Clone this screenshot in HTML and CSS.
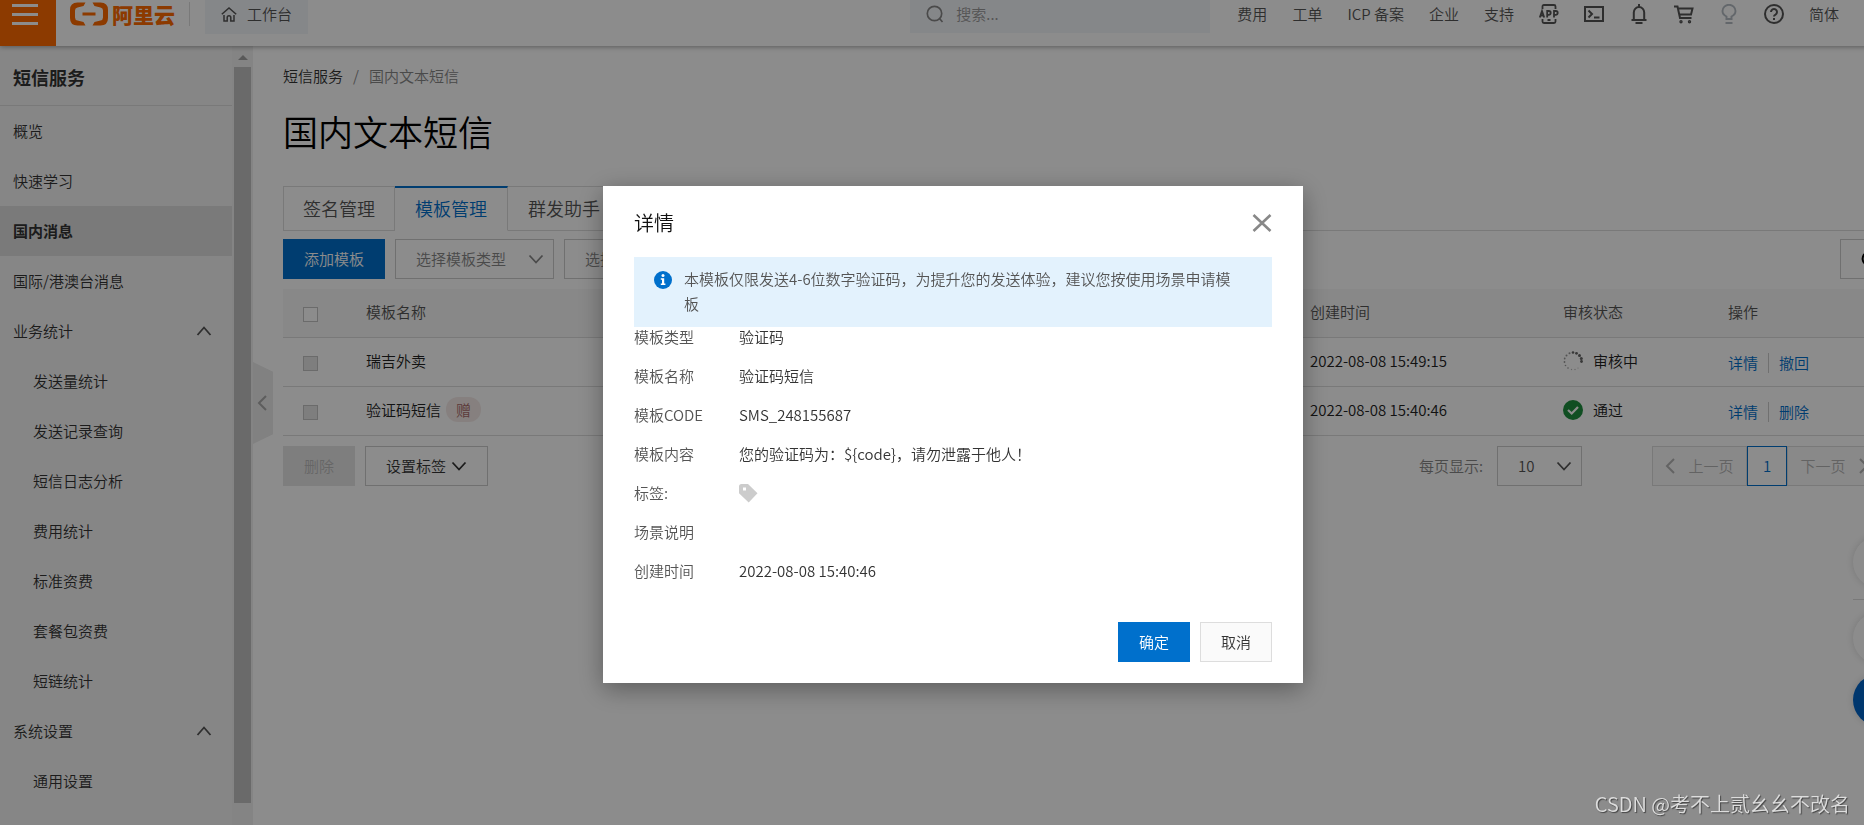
FILE: index.html
```html
<!DOCTYPE html>
<html lang="zh-CN">
<head>
<meta charset="utf-8">
<title>短信服务 - 国内文本短信</title>
<link rel="stylesheet" href="styles.css">
</head>
<body>
<svg class="sprite" aria-hidden="true">
  <symbol id="down" viewBox="0 0 16 16"><path d="M1.500 4.500 8 11.500l6.500-7" fill="none" stroke="currentColor" stroke-width="1.800"/></symbol>
  <symbol id="up" viewBox="0 0 16 16"><path d="M1.500 12 8 4.500l6.500 7.500" fill="none" stroke="currentColor" stroke-width="1.800"/></symbol>
  <symbol id="left" viewBox="0 0 10 16"><path d="M9 1 2 8l7 7" fill="none" stroke="currentColor" stroke-width="2"/></symbol>
  <symbol id="right" viewBox="0 0 10 16"><path d="M1 1l7 7-7 7" fill="none" stroke="currentColor" stroke-width="2"/></symbol>
</svg>
<div class="app">
  <header class="header">
    <button class="menu-btn" aria-label="菜单"><span></span><span></span><span></span></button>
    <a class="logo" href="#">
      <svg width="38" height="24" viewBox="0 0 38 24" fill="#ff6a00" aria-hidden="true">
        <path d="M15.500.5H7.500Q0 .5 0 8v8q0 7.500 7.500 7.500h8l-2-3.600-6-1.400Q5 18 5 15.500v-7Q5 6 7.500 5.500l6-1.400zM22.500.5h8Q38 .5 38 8v8q0 7.500-7.500 7.500h-8l2-3.600 6-1.400q2.500-.5 2.500-3v-7Q33 6 30.500 5.500l-6-1.400zM12.500 10.500h13v3h-13z"/>
      </svg>
      <span>阿里云</span>
    </a>
    <a class="workbench" href="#">
      <svg width="16" height="16" viewBox="0 0 16 16" fill="none" stroke="currentColor" stroke-width="1.500" aria-hidden="true"><path d="M.8 8.200 8 2l7.200 6.200M3 9v6h3.200v-3.500a1.800 1.800 0 0 1 3.600 0V15H13V9"/></svg>
      <span>工作台</span>
    </a>
    <label class="search">
      <svg width="18" height="18" viewBox="0 0 18 18" fill="none" stroke="currentColor" stroke-width="1.700" aria-hidden="true"><circle cx="8.500" cy="8.500" r="7.200"/><path d="m13.500 13.500 3 3.500"/></svg>
      <input type="text" placeholder="搜索..." aria-label="搜索">
    </label>
    <nav class="topnav">
      <a href="#">费用</a><a href="#">工单</a><a href="#">ICP 备案</a><a href="#">企业</a><a href="#">支持</a>
      <a href="#" aria-label="APP"><svg width="20" height="20" viewBox="0 0 20 20" fill="none" stroke="currentColor" stroke-width="1.800"><path d="M3.500 5V2.500Q3.500 1 5 1h10q1.500 0 1.500 1.500V5M3.500 15v2.500Q3.500 19 5 19h10q1.500 0 1.500-1.500V15M8.500 16h3M.8 13.500 3 7l2.200 6.500M1.500 11.500h3M8.200 13.500V7h1.600a1.800 1.800 0 0 1 0 3.800H8.200M15 13.500V7h1.800a1.800 1.800 0 0 1 0 3.800H15"/></svg></a>
      <a href="#" aria-label="命令行"><svg width="20" height="20" viewBox="0 0 20 20" fill="none" stroke="currentColor" stroke-width="2"><path d="M1 3h18v14H1zM4.500 6.500 8 10l-3.500 3.500M10 13.500h5.500"/></svg></a>
      <a href="#" aria-label="消息"><svg width="20" height="20" viewBox="0 0 20 20" fill="none" stroke="currentColor" stroke-width="2"><path d="M10 0v3M2.500 16h15M4.800 16V8.500a5.200 5.500 0 0 1 10.400 0V16M6.500 19h7"/></svg></a>
      <a href="#" aria-label="购物车"><svg width="20" height="20" viewBox="0 0 20 20" fill="none" stroke="currentColor" stroke-width="2"><path d="M0 2.500h3.500L6 14h11.500M4 4.500h14.500L17 10.500H5"/><circle cx="7" cy="17.800" r=".7"/><circle cx="15.500" cy="17.800" r=".7"/></svg></a>
      <a href="#" class="faint" aria-label="提示"><svg width="20" height="20" viewBox="0 0 20 20" fill="none" stroke="currentColor" stroke-width="1.900"><path d="M6.500 15h7M7.500 15v-2.500Q3.500 10.500 3.500 7a6.500 6.200 0 0 1 13 0q0 3.500-4 5.500V15M6.500 19h7"/></svg></a>
      <a href="#" aria-label="帮助"><svg width="20" height="20" viewBox="0 0 20 20" fill="none" stroke="currentColor" stroke-width="2"><circle cx="10" cy="10" r="9"/><path d="M7 8a3 3 0 1 1 4.500 2.600Q10 11.400 10 12.500M10 14v2"/></svg></a>
      <a href="#">简体</a>
    </nav>
  </header>

  <div class="body">
    <aside class="sidebar">
      <nav class="side-nav">
        <h2>短信服务</h2>
        <a href="#">概览</a>
        <a href="#">快速学习</a>
        <a href="#" class="active">国内消息</a>
        <a href="#">国际/港澳台消息</a>
        <button>业务统计<svg width="16" height="16"><use href="#up"/></svg></button>
        <a href="#" class="sub">发送量统计</a>
        <a href="#" class="sub">发送记录查询</a>
        <a href="#" class="sub">短信日志分析</a>
        <a href="#" class="sub">费用统计</a>
        <a href="#" class="sub">标准资费</a>
        <a href="#" class="sub">套餐包资费</a>
        <a href="#" class="sub">短链统计</a>
        <button>系统设置<svg width="16" height="16"><use href="#up"/></svg></button>
        <a href="#" class="sub">通用设置</a>
      </nav>
      <div class="scrollbar"><i class="arrow"></i><i class="thumb"></i></div>
      <button class="collapse" aria-label="收起"><svg width="10" height="16"><use href="#left"/></svg></button>
    </aside>

    <main class="main">
      <div class="crumbs"><a href="#">短信服务</a><span>/</span><span>国内文本短信</span></div>
      <h1>国内文本短信</h1>
      <div class="tabs">
        <button>签名管理</button><button class="on">模板管理</button><button>群发助手</button>
      </div>
      <div class="toolbar">
        <button class="btn primary">添加模板</button>
        <div class="select type"><select aria-label="模板类型"><option>选择模板类型</option></select><svg width="16" height="16"><use href="#down"/></svg></div>
        <div class="select type"><select aria-label="审核状态"><option>选择审核状态</option></select><svg width="16" height="16"><use href="#down"/></svg></div>
        <button class="btn refresh" aria-label="刷新"><svg width="16" height="16" viewBox="0 0 16 16" fill="none" stroke="currentColor" stroke-width="2"><path d="M14 5a6.500 6.500 0 1 0 .5 4M14.500 1v4.500H10"/></svg></button>
      </div>
      <table>
        <colgroup><col class="c-check"><col><col class="c-time"><col class="c-state"><col class="c-op"></colgroup>
        <thead><tr><th><input type="checkbox" aria-label="全选"></th><th>模板名称</th><th>创建时间</th><th>审核状态</th><th>操作</th></tr></thead>
        <tbody>
          <tr>
            <td><input type="checkbox" disabled aria-label="瑞吉外卖"></td><td>瑞吉外卖</td><td>2022-08-08 15:49:15</td>
            <td><div class="state"><svg width="20" height="20" viewBox="0 0 20 20" aria-hidden="true"><g fill="#666"><circle cx="10" cy="1.500" r="1.300"/><circle cx="13.500" cy="2.300" r="1.400"/><circle cx="16.500" cy="4.500" r="1.500"/><circle cx="18.300" cy="7.500" r="1.500"/><circle cx="18.500" cy="10.500" r="1.400"/></g><g fill="#999"><circle cx="6.500" cy="2.300" r="1"/><circle cx="3.500" cy="4.500" r="1"/><circle cx="1.700" cy="7.500" r=".9"/><circle cx="1.500" cy="11" r=".9"/><circle cx="2.500" cy="14.500" r=".8"/><circle cx="5" cy="17" r=".8"/></g><g fill="#bbb"><circle cx="8.500" cy="18.500" r=".7"/><circle cx="12" cy="18.500" r=".7"/><circle cx="15" cy="17" r=".6"/></g></svg>审核中</div></td>
            <td><div class="ops"><a href="#">详情</a><a href="#">撤回</a></div></td>
          </tr>
          <tr>
            <td><input type="checkbox" disabled aria-label="验证码短信"></td><td>验证码短信<span class="gift">赠</span></td><td>2022-08-08 15:40:46</td>
            <td><div class="state"><svg width="20" height="20" viewBox="0 0 20 20" aria-hidden="true"><circle cx="10" cy="10" r="10" fill="#1e8e3e"/><path d="m5 10 3.700 3.500L15 7" fill="none" stroke="#fff" stroke-width="2.200"/></svg>通过</div></td>
            <td><div class="ops"><a href="#">详情</a><a href="#">删除</a></div></td>
          </tr>
        </tbody>
      </table>
      <div class="footer">
        <button class="btn" disabled>删除</button>
        <button class="btn tagset">设置标签<svg width="16" height="16"><use href="#down"/></svg></button>
        <label class="per" for="per">每页显示:</label>
        <div class="select size"><select id="per"><option>10</option></select><svg width="16" height="16"><use href="#down"/></svg></div>
        <div class="pager">
          <button disabled><svg width="10" height="16"><use href="#left"/></svg>上一页</button><button class="cur">1</button><button disabled>下一页<svg width="10" height="16"><use href="#right"/></svg></button>
        </div>
      </div>
    </main>
  </div>
</div>

<div class="float-bar">
  <button aria-label="反馈"></button><hr><button aria-label="客服"></button><button class="blue" aria-label="更多"></button>
</div>

<div class="overlay">
  <section class="modal" role="dialog" aria-labelledby="dlg">
    <div class="modal-head">
      <h3 id="dlg">详情</h3>
      <button class="close" aria-label="关闭"><svg width="20" height="18" viewBox="0 0 20 18"><path d="m1.500 1 17 16M18.500 1l-17 16" stroke="#888" stroke-width="2.600"/></svg></button>
    </div>
    <div class="notice">
      <svg width="18" height="18" viewBox="0 0 18 18" aria-hidden="true"><circle cx="9" cy="9" r="9" fill="#0070cc"/><circle cx="9" cy="4.600" r="1.500" fill="#fff"/><path d="M6.800 7.200h3.400v5.300h1.200V14H6.800v-1.500H8V8.700H6.800z" fill="#fff"/></svg>
      <p>本模板仅限发送4-6位数字验证码，为提升您的发送体验，建议您按使用场景申请模板</p>
    </div>
    <dl>
      <dt>模板类型</dt><dd>验证码</dd>
      <dt>模板名称</dt><dd>验证码短信</dd>
      <dt>模板CODE</dt><dd>SMS_248155687</dd>
      <dt>模板内容</dt><dd>您的验证码为：${code}，请勿泄露于他人！</dd>
      <dt>标签:</dt><dd><svg width="20" height="20" viewBox="0 0 20 20" aria-hidden="true"><path d="M0 3.500Q0 1 2.500 1H9l9.500 9.200-8.800 9.300L0 10.200zM4 4.500v3h3v-3z" fill="#ccc" fill-rule="evenodd"/></svg></dd>
      <dt>场景说明</dt><dd></dd>
      <dt>创建时间</dt><dd>2022-08-08 15:40:46</dd>
    </dl>
    <div class="modal-foot">
      <button class="btn primary">确定</button>
      <button class="btn cancel">取消</button>
    </div>
  </section>
</div>
<div class="watermark">CSDN @考不上贰幺幺不改名</div>
</body>
</html>
```
FILE: styles.css
```css
* { box-sizing: border-box; }
body {
  margin: 0;
  height: 100vh;
  overflow: hidden;
  background: #fff;
  color: #333;
  font: 350 15px/20px "Noto Sans CJK SC", sans-serif;
}
h1, h2, h3, p, dl, dd { margin: 0; }
a { color: inherit; text-decoration: none; }
button, select, input { font: inherit; color: inherit; }
button { border: 0; background: none; padding: 0; }
svg { display: block; flex: none; }
.sprite { position: absolute; width: 0; height: 0; }

/* The layout runs slightly past the right edge of the window. */
.app {
  width: calc(100% + 42px);
  height: 100%;
  display: flex;
  flex-direction: column;
}

.header {
  position: relative;
  z-index: 1;
  flex: none;
  display: flex;
  align-items: center;
  height: 62px;
  margin-top: -16px;
  padding: 0 67px 2px 0;
  background: #fff;
  box-shadow: 0 1px 5px rgba(0, 0, 0, .35);
}
.menu-btn {
  align-self: stretch;
  width: 56px;
  margin-bottom: -2px;
  padding: 0 18px 2px 12px;
  background: #ff6a00;
  display: flex;
  flex-direction: column;
  justify-content: center;
  gap: 6px;
}
.menu-btn span { height: 3px; background: #fff; }
.logo {
  display: flex;
  align-items: center;
  gap: 4px;
  height: 24px;
  padding: 0 14px;
  border-right: 1px solid #ddd;
  color: #ff6a00;
  font-size: 21px;
  font-weight: 900;
}
.workbench {
  display: flex;
  align-items: center;
  gap: 10px;
  height: 40px;
  margin-left: 15px;
  padding: 0 16px;
  background: #f3f6fa;
  color: #555;
}
.search {
  display: flex;
  align-items: center;
  gap: 12px;
  width: 300px;
  height: 38px;
  margin-left: auto;
  padding: 0 16px;
  background: #f3f6fa;
  color: #888;
}
.search input { flex: 1; min-width: 0; border: 0; padding: 0; background: none; outline: 0; }
.search input::placeholder { color: #999; }
.topnav { display: flex; align-items: center; gap: 25px; margin-left: 27px; color: #555; }
.topnav .faint { color: #b5bcc4; }

.body { flex: 1; min-height: 0; display: flex; }
.sidebar { position: relative; flex: none; display: flex; width: 253px; background: #f5f5f5; }
.side-nav { flex: 1; overflow: hidden; }
.side-nav h2 {
  height: 60px;
  padding: 1px 13px 0;
  border-bottom: 1px solid #ddd;
  font-size: 18px;
  line-height: 60px;
}
.side-nav a, .side-nav button {
  display: flex;
  align-items: center;
  justify-content: space-between;
  width: 100%;
  height: 50px;
  padding: 0 20px 0 13px;
}
.side-nav button svg { color: #555; }
.side-nav .sub { padding-left: 33px; }
.side-nav .active { background: #dedede; font-weight: 700; }
.scrollbar { width: 21px; padding: 9px 2px 22px; background: #f1f1f1; display: flex; flex-direction: column; align-items: center; }
.arrow { border: 5px solid transparent; border-top: 0; border-bottom-color: #a3a3a3; margin-bottom: 7px; }
.thumb { flex: 1; width: 17px; background: #c1c1c1; }
.collapse {
  position: absolute;
  left: 100%;
  top: 316px;
  width: 20px;
  height: 82px;
  padding-left: 4px;
  background: #ebebeb;
  color: #aaa;
  clip-path: polygon(0 0, 100% 12%, 100% 88%, 0 100%);
}

.main { flex: 1; min-width: 0; padding: 20px 24px 0 30px; }
.crumbs { display: flex; gap: 10px; color: #888; }
.crumbs a { color: #333; }
h1 { margin: 19px 0 29px; font-size: 35px; line-height: 52px; font-weight: 350; color: #000; }
.tabs { display: flex; height: 45px; border-bottom: 1px solid #ddd; font-size: 18px; }
.tabs button { height: 45px; padding: 0 20px 2px; border: 1px solid #ddd; border-left-width: 0; color: #555; }
.tabs button:first-child { padding: 0 19px 2px; border-left-width: 1px; }
.tabs .on { border-top: 2px solid #0070cc; border-bottom-color: #fff; color: #0070cc; }
.toolbar { display: flex; gap: 10px; margin: 8px 0 10px; }
.btn { height: 40px; padding: 0 20px; border: 1px solid #ccc; }
.btn.primary { border-color: #0070cc; background: #0070cc; color: #fff; }
.btn:disabled { border-color: #e6e6e6; background: #e6e6e6; color: #bbb; }
.btn.refresh { width: 42px; margin-left: auto; padding: 0 4px 0 20px; color: #000; }
.select { position: relative; height: 40px; color: #888; }
.select select { width: 100%; height: 100%; padding: 0 20px; border: 1px solid #ccc; background: none; appearance: none; }
.select svg { position: absolute; right: 10px; top: 12px; pointer-events: none; }
.select.type { width: 159px; }
.select.size { width: 85px; color: #555; }

table { width: 100%; border-collapse: separate; border-spacing: 0; table-layout: fixed; }
.c-check { width: 63px; }
.c-time { width: 253px; }
.c-state { width: 165px; }
.c-op { width: 174px; }
th, td { height: 49px; padding: 0 20px 2px; border-bottom: 1px solid #ddd; text-align: left; font-weight: 350; }
th { background: #f7f7f7; color: #555; }
td { color: #222; }
table input { display: block; width: 15px; height: 15px; margin: 5px 0 0; appearance: none; border: 1px solid #c4c4c4; background: #fff; }
table input:disabled { background: #e6e6e6; }
.gift { margin-left: 5px; padding: 2px 10px; border-radius: 12px; background: #f5eae8; color: #a86a6a; }
.state { display: flex; align-items: center; gap: 10px; }
.ops { display: flex; margin-top: 4px; color: #0070cc; }
.ops a + a { margin-left: 10px; padding-left: 10px; border-left: 1px solid #ccc; }

.footer { display: flex; align-items: center; gap: 10px; margin-top: 10px; }
.tagset { display: flex; align-items: center; gap: 5px; }
.per { margin-left: auto; margin-right: 4px; color: #888; }
.pager { display: flex; margin-left: 60px; }
.pager button { display: flex; align-items: center; justify-content: center; gap: 13px; width: 95px; height: 40px; border: 1px solid #ddd; background: #fafafa; color: #b5b5b5; }
.pager .cur { width: 40px; border-color: #0070cc; background: #fff; color: #0070cc; }

.float-bar { position: fixed; right: -41px; top: 536px; width: 52px; }
.float-bar button { display: block; width: 52px; height: 52px; border-radius: 50%; background: #fff; box-shadow: 0 0 8px rgba(0, 0, 0, .15); }
.float-bar hr { margin: 11px 0 12px; border: 0; border-top: 1px solid #ddd; }
.float-bar .blue { margin-top: 10px; background: #0064c8; }

.overlay {
  position: fixed;
  inset: 0;
  z-index: 2;
  display: flex;
  justify-content: center;
  align-items: flex-start;
  padding: 186px 0 0 42px;
  background: rgba(0, 0, 0, .45);
}
.modal { width: 700px; padding: 21px 31px; background: #fff; box-shadow: 0 6px 24px rgba(0, 0, 0, .35); }
.modal-head { display: flex; justify-content: space-between; height: 50px; }
.modal-head h3 { font-size: 20px; line-height: 32px; font-weight: 350; color: #111; }
.close { height: 32px; }
.notice { display: flex; gap: 12px; padding: 9px 30px 11px 20px; background: #e3f2fd; color: #555; line-height: 25px; }
.notice svg { margin-top: 5px; }
dl { display: grid; grid-template-columns: 105px 1fr; grid-auto-rows: 20px; row-gap: 19px; }
dt { color: #555; }
.modal-foot { display: flex; justify-content: flex-end; gap: 10px; margin-top: 41px; }
.btn.cancel { border-color: #ddd; background: #fafafa; }

.watermark {
  position: fixed;
  right: 14px;
  bottom: 8px;
  z-index: 3;
  font-size: 20px;
  font-weight: 350;
  line-height: 26px;
  color: #ddd;
  text-shadow: 1px 1px 1px #444;
}
```
